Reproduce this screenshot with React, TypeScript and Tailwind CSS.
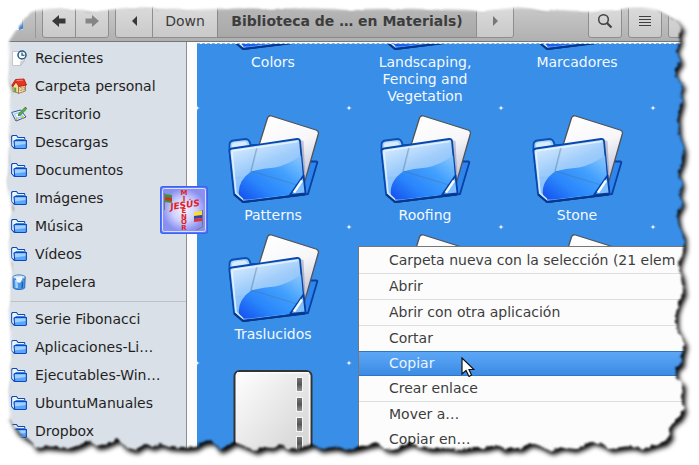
import React from "react";

const places = [
  { name: "Recientes", icon: "recent" },
  { name: "Carpeta personal", icon: "home" },
  { name: "Escritorio", icon: "desktop" },
  { name: "Descargas", icon: "folder" },
  { name: "Documentos", icon: "folder" },
  { name: "Imágenes", icon: "folder" },
  { name: "Música", icon: "folder" },
  { name: "Vídeos", icon: "folder" },
  { name: "Papelera", icon: "trash" },
];

const bookmarks = ["Serie Fibonacci", "Aplicaciones-Li…", "Ejecutables-Win…", "UbuntuManuales", "Dropbox"];

const menuGroups = [
  ["Carpeta nueva con la selección (21 elem"],
  ["Abrir"],
  ["Abrir con otra aplicación"],
  ["Cortar", "Copiar", "Crear enlace"],
  ["Mover a…", "Copiar en…"],
];

function PlaceIcon({ kind }: { kind: string }) {
  if (kind === "recent")
    return (
      <svg viewBox="0 0 16 16" className="size-4 shrink-0" aria-hidden="true">
        <path d="M1.500 1.500h12v9l-4 5h-8z" fill="#fdfdfd" stroke="#c3c6ca" />
        <path d="M9.500 15.500l.3-4 3.700-1z" fill="#ddd" stroke="#aaa" strokeWidth=".5" />
        <circle cx="11" cy="5" r="4" fill="#f4fafc" stroke="#205a86" strokeWidth="1.500" />
        <path d="M11 2.500V5.300h2.500" fill="none" stroke="#23384c" strokeWidth="1.100" />
      </svg>
    );
  if (kind === "home")
    return (
      <svg viewBox="0 0 16 16" className="size-4 shrink-0" aria-hidden="true">
        <path d="M2 7.500l3-4 3 3.500v8.300L2 13.500z" fill="#f6dc9d" stroke="#8d693b" strokeWidth=".8" />
        <path d="M7.500 8v7.300l7-2.300V7z" fill="#fbe6ae" stroke="#8d693b" strokeWidth=".8" />
        <path d="M.7 7.500L4.500 1.500l8.500-.5 2.500 6-7.500 1.500L5 4 1.800 8.500z" fill="#e43622" stroke="#a9170d" strokeWidth=".8" />
        <path d="M5.500 2.500l6.500-.3" stroke="#ff8169" />
        <path d="M3.200 9.500l2 .3V14.200l-2-.7z" fill="#5aa42c" />
        <path d="M9 9.500h1.700v3H9zM12 9h1.500v3H12z" fill="#fff" stroke="#a96b31" strokeWidth=".6" />
      </svg>
    );
  if (kind === "desktop")
    return (
      <svg viewBox="0 0 16 16" className="size-4 shrink-0" aria-hidden="true">
        <path d="M.6 6.500l9-2.500L15 11l-10 4z" fill="#f3f8fe" stroke="#25569c" />
        <path d="M2.500 7.500l6.500-2 4 5.200-7.300 2.700z" fill="#a9cdf4" />
        <path d="M4 8.500l3.500-1 2 3-3 1z" fill="#fff" />
        <path d="M14.500 1L8 7.500l-.8 2.200 2.200-.6L15.500 3z" fill="#57ba45" stroke="#236d21" strokeWidth=".8" />
        <path d="M4.500 12.500l1.500 1.500M11 12l2-1" stroke="#e0ad1d" strokeWidth="1.600" />
      </svg>
    );
  if (kind === "trash")
    return (
      <svg viewBox="0 0 16 16" className="size-4 shrink-0" aria-hidden="true">
        <path d="M1.800 3l.5 11c2.500 2 9 2 11.400 0l.5-11z" fill="#4a97e6" stroke="#286bbd" />
        <path d="M4 6l.5 8h2.500l-.5-8z" fill="#a8d2f8" />
        <ellipse cx="8" cy="3.200" rx="6.300" ry="2.300" fill="#cfe3f6" stroke="#3b7bc4" />
        <path d="M4.500 3l3 .5 3-1.500 1 3-2.500 4-3-1z" fill="#f0f7fd" />
        <path d="M11.500 8l-.3 6" stroke="#1f60b5" strokeWidth="1.500" />
      </svg>
    );
  return (
    <svg viewBox="0 0 16 16" className="size-4 shrink-0" aria-hidden="true">
      <path d="M.6 11.500V2.500L1.600 1.500H5.500L7 3.500h6.500l.5 2.500v5L3 14.200z" fill="#eaf4ff" stroke="#0d4ab5" strokeWidth="1.100" strokeLinejoin="round" />
      <path d="M4.500 5.500h8.500" stroke="#3a82dd" />
      <path d="M3 7.200l.8-.7h11.600v7.300l-.8.700H3.800z" fill="#5ba6fa" stroke="#0b48bd" strokeWidth="1.100" />
      <path d="M4 7.500h10.500v2.500L4 11.500z" fill="#a2d0ff" />
    </svg>
  );
}

function PlaceRow({ name, icon }: { name: string; icon: string }) {
  return (
    <li>
      <button type="button" className="flex h-7 w-full items-center gap-2 pl-[11px] text-left text-[#1f1f1f]">
        <PlaceIcon kind={icon} />
        <span className="whitespace-nowrap">{name}</span>
      </button>
    </li>
  );
}

function BigFolder() {
  return (
    <svg viewBox="0 0 100 93" className="h-[93px] w-[100px] shrink-0" aria-hidden="true">
      <defs>
        <linearGradient id="paper" x1=".3" y1="0" x2=".7" y2="1">
          <stop offset="0" stopColor="#fff" />
          <stop offset=".45" stopColor="#f7f7fa" />
          <stop offset="1" stopColor="#b9b9cf" />
        </linearGradient>
        <linearGradient id="front" x1=".1" y1="0" x2=".6" y2="1">
          <stop offset="0" stopColor="#e6f3ff" />
          <stop offset=".45" stopColor="#9ccbfb" />
          <stop offset="1" stopColor="#6ab4fd" />
        </linearGradient>
        <linearGradient id="gloss" x1="0" y1="1" x2="1" y2=".2">
          <stop offset="0" stopColor="#0a44ee" />
          <stop offset=".35" stopColor="#2280fb" />
          <stop offset=".7" stopColor="#3a9cfe" />
          <stop offset="1" stopColor="#7cc0fd" />
        </linearGradient>
      </defs>
      <path d="M87 47.500l6 0q2 0 1 2L85 80 20 88 70 60z" fill="#2f85ee" stroke="#0742a0" strokeWidth="1.800" strokeLinejoin="round" />
      <path d="M6.500 36V31q0-4 4-4.500l12-1.500q4 0 5 6l20 1-8 30-30 2z" fill="#a8d3fd" stroke="#0a50b4" strokeWidth="1.800" />
      <path d="M9 31q0-2 3-2.500l10-1q2 1 2.500 3.500l-15.500 3z" fill="#d8ecff" />
      <path d="M44.500 4q1-3 4-2l44.500 14q3 1 2.300 4L80 74 28 57z" fill="url(#paper)" stroke="#505359" strokeWidth="1.300" />
      <path d="M77 26l3.500 1 2 38-2 10z" fill="#77779a" opacity=".4" />
      <path d="M6.500 37.500q-.3-2.500 2.500-3L74 25q2.500-.3 3 2l5 53-54 7-8 1-9-8z" fill="url(#front)" fillOpacity=".95" stroke="#0848ad" strokeWidth="1.800" strokeLinejoin="round" />
      <path d="M20 85.500l-4-4q-2-14 12-24 10-3 24-4 14-3 26-12l3.300 37.500-54 6.500z" fill="url(#gloss)" opacity=".92" />
      <path d="M34 33L28 57l46 14" fill="none" stroke="#4a7397" strokeWidth="1.300" opacity=".4" />
      <path d="M9.500 37l65-9.500M9 38l4 41 7 6.500" fill="none" stroke="#eaf7ff" strokeWidth="1.600" opacity=".8" />
      <path d="M80.500 61.500L67 81l15.500-1.500z" fill="#7fbffd" stroke="#063fa4" strokeWidth="1.800" strokeLinejoin="round" />
      <path d="M79 66.500L71 78.500" stroke="#f4fbff" strokeWidth="2.400" />
      <path d="M11 80.500l9 7.500 62-7.500" fill="none" stroke="#07378a" strokeWidth="2" strokeLinejoin="round" />
    </svg>
  );
}

function ZipIcon() {
  return (
    <svg viewBox="0 0 100 93" className="h-[93px] w-[100px] shrink-0" aria-hidden="true">
      <defs>
        <linearGradient id="sheet" x1="0" y1="0" x2="1" y2="1">
          <stop offset="0" stopColor="#fff" />
          <stop offset="1" stopColor="#cfcfcf" />
        </linearGradient>
        <linearGradient id="tooth" x1="0" y1="0" x2="0" y2="1">
          <stop offset="0" stopColor="#777" />
          <stop offset=".5" stopColor="#555" />
          <stop offset="1" stopColor="#999" />
        </linearGradient>
      </defs>
      <rect x="11.500" y="2" width="77" height="90" rx="5" fill="url(#sheet)" stroke="#333" strokeWidth="2" />
      <path d="M86.500 6v85M14 3.700h72" stroke="#fff" strokeWidth="1.500" opacity=".8" />
      <g fill="url(#tooth)" stroke="#f4f4f4" strokeWidth="1">
        <rect x="73.500" y="8.500" width="6" height="14" />
        <rect x="73.500" y="28.500" width="6" height="14" />
        <rect x="73.500" y="48.500" width="6" height="14" />
        <rect x="73.500" y="67.500" width="6" height="14" />
      </g>
    </svg>
  );
}

function FileCell({ name, zip, className = "" }: { name?: string; zip?: boolean; className?: string }) {
  return (
    <li className={`flex flex-col items-center rounded-[3px] bg-[#398ee7] px-4 pt-[6px] pb-[3px] text-center leading-[17px] text-[#f4f9ff] ${className}`}>
      {zip ? <ZipIcon /> : name !== undefined && <BigFolder />}
      <span>{name}</span>
    </li>
  );
}

const toolButton =
  "flex items-center justify-center border border-[#8e8e8e] bg-linear-to-b from-[#dcdcdc] to-[#c9c9c9] text-[#3c3c3c]";

function Toolbar() {
  return (
    <header className="flex h-[42px] shrink-0 items-start border-b border-[#777] bg-linear-to-b from-[#cecece] to-[#b0b0b0] pt-1 text-[#4a4a4a]">
      <div className="mt-[10px] ml-3 h-5 w-3">
        <svg viewBox="0 0 12 20" className="h-5 w-3" aria-hidden="true">
          <path d="M0 16L7 1l4 3v12z" fill="#dfecf8" />
          <path d="M4 7l4-5 3 1v12l-4 1-1-5z" fill="#4e83c6" />
          <path d="M7 4l3 1v7z" fill="#9fc6ee" />
        </svg>
      </div>
      <div className="ml-[11px] h-[34px] w-px bg-[#989898]" />
      <nav className="ml-[6px] flex" aria-label="Historial">
        <button type="button" aria-label="Atrás" className={`${toolButton} h-[34px] w-[34px] rounded-l-[3px]`}>
          <svg viewBox="0 0 14 12" className="h-3 w-[14px]"><path d="M0 6l7-6v3.500h6.500v5H7V12z" fill="#383838" /></svg>
        </button>
        <button type="button" aria-label="Adelante" className={`${toolButton} -ml-px h-[34px] w-[34px] rounded-r-[3px]`}>
          <svg viewBox="0 0 14 12" className="h-3 w-[14px]"><path d="M14 6L7 0v3.500H.5v5H7V12z" fill="#858585" /></svg>
        </button>
      </nav>
      <nav className="ml-[6px] flex" aria-label="Ruta">
        <button type="button" aria-label="Ruta anterior" className={`${toolButton} h-[34px] w-[38px] rounded-l-[3px]`}>
          <svg viewBox="0 0 5 10" className="h-[10px] w-[5px]"><path d="M5 0v10L0 5z" fill="#383838" /></svg>
        </button>
        <button type="button" className={`${toolButton} -ml-px h-[34px] w-[66px]`}>Down</button>
        <button type="button" className="-ml-px h-[34px] w-[260px] border border-[#888] bg-linear-to-b from-[#b8b8b8] to-[#a8a8a8] font-bold whitespace-nowrap text-[#3d3d3d]">
          Biblioteca de … en Materials)
        </button>
        <button type="button" aria-label="Ruta siguiente" className={`${toolButton} -ml-px h-[34px] w-[38px] rounded-r-[3px]`}>
          <svg viewBox="0 0 5 10" className="h-[10px] w-[5px]"><path d="M0 0v10L5 5z" fill="#777" /></svg>
        </button>
      </nav>
      <div className="-mr-[3px] ml-auto flex gap-[6px]">
        <button type="button" aria-label="Buscar" className={`${toolButton} h-[34px] w-[34px] rounded-[3px]`}>
          <svg viewBox="0 0 16 16" className="size-4" fill="none" stroke="#404040">
            <circle cx="6.500" cy="6.500" r="4.800" strokeWidth="1.500" />
            <path d="M10 10l4.500 4.500" strokeWidth="2.200" />
          </svg>
        </button>
        <button type="button" aria-label="Vista" className={`${toolButton} h-[34px] w-[34px] rounded-[3px]`}>
          <svg viewBox="0 0 12 12" className="size-3" stroke="#404040" shapeRendering="crispEdges">
            <path d="M0 1.500h12M0 4.500h12M0 7.500h12M0 10.500h12" />
          </svg>
        </button>
        <button type="button" aria-label="Opciones" className={`${toolButton} h-[34px] w-[34px] rounded-[3px]`} />
      </div>
    </header>
  );
}

function Avatar() {
  return (
    <svg viewBox="0 0 48 48" className="absolute top-[186px] left-[160px] size-12" role="img" aria-label="Jesús Misenor">
      <defs>
        <radialGradient id="glow">
          <stop offset="0" stopColor="#f4f4ff" />
          <stop offset=".55" stopColor="#cfd0fd" />
          <stop offset="1" stopColor="#8a90f0" />
        </radialGradient>
      </defs>
      <rect x=".8" y=".8" width="46.400" height="46.400" rx="2" fill="#7a92f7" stroke="#3a62f3" strokeWidth="1.500" />
      <rect x="2.500" y="2.500" width="43" height="43" rx="2" fill="url(#glow)" stroke="#dadfff" />
      <path d="M4.500 7v17" stroke="#77737c" />
      <path d="M5 8l7 1v8l-7-1z" fill="#39953a" />
      <path d="M5 11l7 1v3l-7-1z" fill="#d82a26" />
      <path d="M42.500 24v17l-6 3" fill="none" stroke="#77737c" />
      <path d="M34 26l8-1v4l-8 1z" fill="#f8df2c" />
      <path d="M34 30l8-1v3l-8 1z" fill="#2e46ac" />
      <path d="M34 33l8-1v3l-8 1z" fill="#df3131" />
      <g fill="#e01f26" fontFamily="'DejaVu Sans', sans-serif" fontWeight="bold" textAnchor="middle">
        <g fontSize="7">
          <text x="24" y="9">M</text>
          <text x="24" y="15">I</text>
          <text x="24" y="27">E</text>
          <text x="24" y="33">N</text>
          <text x="24" y="38">O</text>
          <text x="24" y="44">R</text>
        </g>
        <text x="25" y="22" fontSize="9" fontStyle="italic" transform="rotate(-8 25 19)">JESÚS</text>
      </g>
    </svg>
  );
}

function ContextMenu() {
  return (
    <div role="menu" className="absolute top-[246px] right-0 left-[358px] border border-[#777] bg-[#fcfcfc] pt-px text-[#3e3e3e]">
      {menuGroups.map((group) => (
        <div key={group[0]} className="border-b border-[#dedede]">
          {group.map((item) => (
            <button
              key={item}
              type="button"
              role="menuitem"
              className={
                item === "Copiar"
                  ? "block h-[25px] w-full border-y border-[#2f75c5] bg-linear-to-b from-[#5ca6f6] to-[#3b8ce5] pl-[30px] text-left leading-[23px] whitespace-nowrap text-[#eaf3ff]"
                  : "block h-[25px] w-full pl-[30px] text-left leading-[25px] whitespace-nowrap"
              }
            >
              {item}
            </button>
          ))}
        </div>
      ))}
    </div>
  );
}

const tornOutline =
  "M14 31L20 25 24 18 31 11 42 6 52 8 62 8 70 10 82 9 94 12 105 10 120 7 132 8 145 6 160 9 174 8 188 10 205 7 222 8 240 7 256 8 270 10 285 8 300 7 318 6 334 8 347 10 358 10 372 7 386 8 395 10 408 7 420 8 432 10 445 8 458 7 468 9 480 12 492 9 503 8 516 6 530 8 545 11 560 9 575 10 590 12 602 9 615 11 626 7 640 7 652 6 661 11 668 15 675 19 681 26 682 29 679 33 680 40 676 50 681 61 675 70 676 76 683 85 680 92 682 101 678 116 679 134 684 149 683 160 678 173 682 183 679 195 683 202 677 214 679 226 684 235 684 247 681 256 678 266 682 276 684 292 679 302 676 312 676 326 681 336 685 343 682 356 682 363 676 368 676 377 683 383 682 402 684 409 680 417 671 424 669 430 671 435 665 442 655 445 642 449 632 446 622 447 610 449 601 444 592 441 584 445 574 449 562 447 550 451 538 445 530 443 520 449 512 448 503 450 496 445 484 448 475 448 460 450 445 448 430 449 418 446 411 443 402 446 394 450 385 449 378 443 368 445 357 448 346 450 335 447 320 449 312 444 304 447 296 449 288 449 280 444 271 448 264 447 255 451 244 446 234 442 226 447 219 450 212 441 203 442 195 447 185 448 169 447 160 444 152 447 144 444 135 450 125 447 118 439 111 442 104 445 96 446 90 440 80 445 70 448 56 447 45 446 35 448 31 441 24 437 15 430 11 421 7 413 9 402 8 388 12 374 9 364 12 355 8 343 10 325 8 312 11 296 10 282 13 270 9 258 7 245 11 232 9 219 13 210 8 198 6 183 9 166 8 152 11 142 7 130 9 115 9 101 12 92 8 78 9 66 8 52 7 41z";

const softEdge =
  "M6 420L3 385 7 350 4 310 7 270 3 230 7 205 1 180 4 140 6 110 3 80 5 55 4 40 12 28 19 17 30 7 60 3 95 6 140 2 200 5 260 3 350 5 400 4 480 6 520 3 590 7 640 2 660 6 680 16";

function TornEdge() {
  return (
    <svg viewBox="0 0 699 465" preserveAspectRatio="none" className="pointer-events-none absolute inset-0 h-full w-full" aria-hidden="true">
      <defs>
        <filter id="ragged" x="-5%" y="-5%" width="110%" height="110%">
          <feTurbulence type="fractalNoise" baseFrequency=".2" numOctaves="2" seed="4" result="noise" />
          <feDisplacementMap in="SourceGraphic" in2="noise" scale="5" xChannelSelector="R" yChannelSelector="G" />
          <feGaussianBlur stdDeviation=".9" />
        </filter>
        <filter id="shade" x="-5%" y="-5%" width="110%" height="110%">
          <feGaussianBlur stdDeviation="2.800" />
        </filter>
        <filter id="mist" x="-5%" y="-5%" width="110%" height="110%">
          <feGaussianBlur stdDeviation="1.500" />
        </filter>
        <mask id="outside" maskUnits="userSpaceOnUse" x="0" y="0" width="699" height="465">
          <rect width="699" height="465" fill="#fff" />
          <path d={tornOutline} fill="#000" filter="url(#ragged)" />
        </mask>
      </defs>
      <g mask="url(#outside)">
        <rect width="699" height="465" fill="#fff" />
        <path d={tornOutline} fill="#000" filter="url(#shade)" transform="translate(3 4)" />
      </g>
      <path d={softEdge} fill="none" stroke="#fff" strokeWidth="9" strokeLinejoin="round" filter="url(#mist)" />
    </svg>
  );
}

export default function App() {
  return (
    <div className="relative flex h-screen w-full flex-col overflow-hidden bg-white font-['DejaVu_Sans',sans-serif] text-[14px] leading-[17px]">
      <Toolbar />
      <main className="flex min-h-0 flex-1 overflow-hidden">
        <aside className="w-[187px] shrink-0 overflow-hidden border-r border-[#8b8e92] bg-[#dae0e7] pt-[2px]">
          <ul>
            {places.map((p) => (
              <PlaceRow key={p.name} {...p} />
            ))}
          </ul>
          <hr className="mt-[5px] mb-[3px] border-[#bfc3c6]" />
          <ul>
            {bookmarks.map((name) => (
              <PlaceRow key={name} name={name} icon="folder" />
            ))}
          </ul>
        </aside>
        <section className="min-w-0 flex-1 overflow-hidden bg-[#fcfcfc] pt-px pl-[10px]">
          <div className="flex h-[65px] flex-col justify-end overflow-hidden border-t border-dashed border-[#7fb4ea] bg-[#2a76c8]">
            <ul className="grid shrink-0 grid-cols-[repeat(4,152px)] bg-[#fcfcfc]">
              <FileCell name="Colors" />
              <FileCell name="Landscaping, Fencing and Vegetation" />
              <FileCell name="Marcadores" />
              <FileCell />
            </ul>
          </div>
          <ul className="grid grid-cols-[repeat(4,152px)]">
            <FileCell name="Patterns" />
            <FileCell name="Roofing" />
            <FileCell name="Stone" />
            <FileCell />
            <FileCell name="Traslucidos" className="min-h-[136px]" />
            <FileCell name="" />
            <FileCell name="" />
            <FileCell />
            <FileCell zip className="min-h-[136px]" />
            <FileCell />
            <FileCell />
            <FileCell />
          </ul>
        </section>
      </main>
      <Avatar />
      <ContextMenu />
      <svg viewBox="0 0 14 20" className="absolute top-[357px] left-[461px] h-5 w-[14px]" aria-hidden="true">
        <path d="M1 1v16l4-3.500 3 6 2.500-1.500-2.500-5.500H13z" fill="#fff" stroke="#111" strokeWidth="1.200" />
      </svg>
      <TornEdge />
    </div>
  );
}
